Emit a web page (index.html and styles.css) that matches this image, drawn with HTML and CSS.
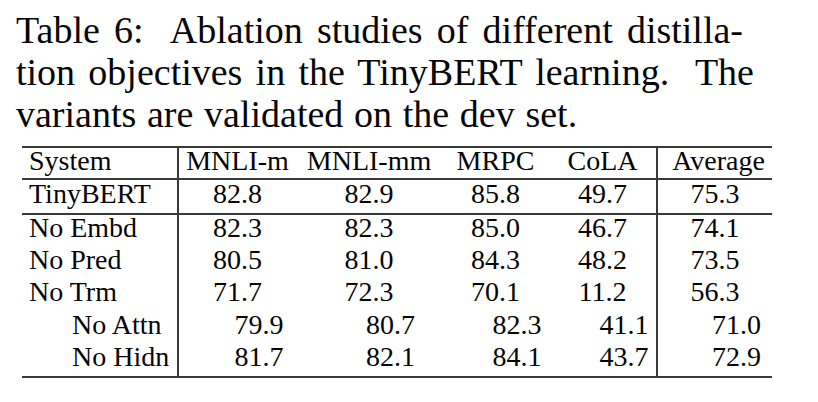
FILE: index.html
```html
<!DOCTYPE html>
<html>
<head>
<meta charset="utf-8">
<link rel="stylesheet" href="styles.css">
</head>
<body>
<div class="caption">
  <span class="line l1">Table 6:&nbsp; Ablation studies of different distilla-</span>
  <span class="line l2">tion objectives in the TinyBERT learning.&nbsp; The</span>
  <span class="line l3">variants are validated on the dev set.</span>
</div>
<table class="tbl">
  <colgroup>
    <col class="c1"><col class="c2"><col class="c3"><col class="c4"><col class="c5"><col class="c6">
  </colgroup>
  <thead>
    <tr class="head">
      <th class="sys">System</th><th>MNLI-m</th><th>MNLI-mm</th><th>MRPC</th><th>CoLA</th><th class="avg avgh">Average</th>
    </tr>
  </thead>
  <tbody>
    <tr class="base">
      <td class="sys">TinyBERT</td><td>82.8</td><td>82.9</td><td>85.8</td><td>49.7</td><td class="avg">75.3</td>
    </tr>
    <tr class="row">
      <td class="sys">No Embd</td><td>82.3</td><td>82.3</td><td>85.0</td><td>46.7</td><td class="avg">74.1</td>
    </tr>
    <tr class="row">
      <td class="sys">No Pred</td><td>80.5</td><td>81.0</td><td>84.3</td><td>48.2</td><td class="avg">73.5</td>
    </tr>
    <tr class="row">
      <td class="sys">No Trm</td><td>71.7</td><td>72.3</td><td>70.1</td><td>11.2</td><td class="avg">56.3</td>
    </tr>
    <tr class="row sub">
      <td class="sys">No Attn</td><td>79.9</td><td>80.7</td><td>82.3</td><td>41.1</td><td class="avg">71.0</td>
    </tr>
    <tr class="row sub">
      <td class="sys">No Hidn</td><td>81.7</td><td>82.1</td><td>84.1</td><td>43.7</td><td class="avg">72.9</td>
    </tr>
  </tbody>
</table>
</body>
</html>
```
FILE: styles.css
```css
html, body {
  margin: 0;
  padding: 0;
  background: #ffffff;
}

body {
  font-family: "Liberation Serif", "DejaVu Serif", serif;
  color: #050505;
  width: 818px;
  height: 402px;
  overflow: hidden;
}

.caption {
  padding: 9px 0 0 16px;
  font-size: 38px;
  line-height: 42px;
}

.line {
  display: block;
  white-space: nowrap;
}

.l1 {
  width: 727px;
  text-align: justify;
  text-align-last: justify;
}

.l2 {
  width: 738px;
  text-align: justify;
  text-align-last: justify;
}

.l3 {
  text-align: left;
  word-spacing: 1.2px;
}

.tbl {
  margin: 11px 0 0 22px;
  border-collapse: separate;
  border-spacing: 0;
  table-layout: fixed;
  width: 750px;
  border-top: 2px solid #3a3a3a;
  border-bottom: 2px solid #3a3a3a;
  font-size: 28px;
  line-height: 25px;
}

.c1 { width: 157px; }
.c2 { width: 117px; }
.c3 { width: 146px; }
.c4 { width: 107px; }
.c5 { width: 107px; }
.c6 { width: 116px; }

.tbl th,
.tbl td {
  padding: 0;
  font-weight: normal;
  text-align: center;
  vertical-align: top;
  white-space: nowrap;
}

.tbl .sys {
  text-align: left;
  padding-left: 7px;
  border-right: 2px solid #3a3a3a;
}

.tbl .avg {
  border-left: 2px solid #3a3a3a;
}

.tbl .avgh {
  padding-left: 7px;
}

.head th {
  padding-bottom: 5px;
  border-bottom: 2px solid #3a3a3a;
}

.base td {
  padding-top: 1px;
  padding-bottom: 7px;
  border-bottom: 2px solid #3a3a3a;
}

.row td {
  height: 32.2px;
  box-sizing: border-box;
}

.sub td {
  padding-left: 43px;
}

.sub td.sys {
  padding-left: 50px;
}
```
